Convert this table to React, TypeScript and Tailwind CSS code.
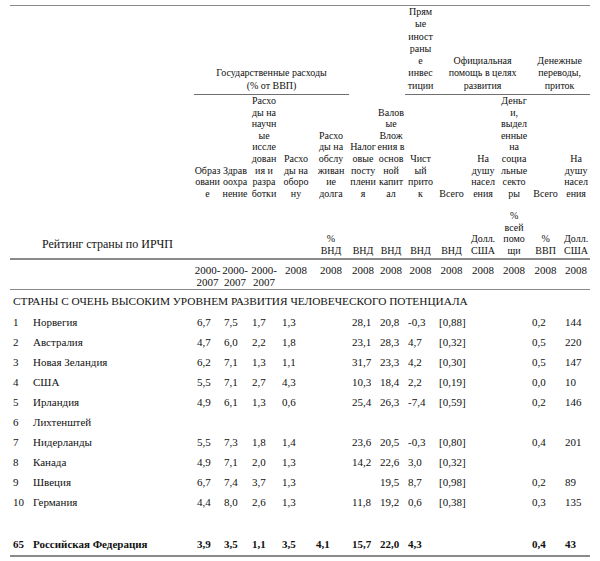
import React from 'react';

type Row = [string, string, string[]];

// 13 числовых столбцов, слева направо
const SUB_HEADERS: string[][] = [
  ['Образ', 'овани', 'е'],
  ['Здрав', 'оохра', 'нение'],
  ['Расхо', 'ды на', 'научн', 'ые', 'иссле', 'дован', 'ия и', 'разра', 'ботки'],
  ['Расхо', 'ды на', 'оборо', 'ну'],
  ['Расхо', 'ды на', 'обслу', 'живан', 'ие', 'долга'],
];

const UNITS: string[][] = [
  [],
  [],
  [],
  [],
  ['%', 'ВНД'],
  ['ВНД'],
  ['ВНД'],
  ['ВНД'],
  ['ВНД'],
  ['Долл.', 'США'],
  ['%', 'всей', 'помо', 'щи'],
  ['%', 'ВВП'],
  ['Долл.', 'США'],
];

const YEARS: string[][] = [
  ['2000-', '2007'],
  ['2000-', '2007'],
  ['2000-', '2007'],
  ['2008'],
  ['2008'],
  ['2008'],
  ['2008'],
  ['2008'],
  ['2008'],
  ['2008'],
  ['2008'],
  ['2008'],
  ['2008'],
];

const ROWS: Row[] = [
  ['1', 'Норвегия', ['6,7', '7,5', '1,7', '1,3', '', '28,1', '20,8', '-0,3', '[0,88]', '', '', '0,2', '144']],
  ['2', 'Австралия', ['4,7', '6,0', '2,2', '1,8', '', '23,1', '28,3', '4,7', '[0,32]', '', '', '0,5', '220']],
  ['3', 'Новая Зеландия', ['6,2', '7,1', '1,3', '1,1', '', '31,7', '23,3', '4,2', '[0,30]', '', '', '0,5', '147']],
  ['4', 'США', ['5,5', '7,1', '2,7', '4,3', '', '10,3', '18,4', '2,2', '[0,19]', '', '', '0,0', '10']],
  ['5', 'Ирландия', ['4,9', '6,1', '1,3', '0,6', '', '25,4', '26,3', '-7,4', '[0,59]', '', '', '0,2', '146']],
  ['6', 'Лихтенштей', ['', '', '', '', '', '', '', '', '', '', '', '', '']],
  ['7', 'Нидерланды', ['5,5', '7,3', '1,8', '1,4', '', '23,6', '20,5', '-0,3', '[0,80]', '', '', '0,4', '201']],
  ['8', 'Канада', ['4,9', '7,1', '2,0', '1,3', '', '14,2', '22,6', '3,0', '[0,32]', '', '', '', '']],
  ['9', 'Швеция', ['6,7', '7,4', '3,7', '1,3', '', '', '19,5', '8,7', '[0,98]', '', '', '0,2', '89']],
  ['10', 'Германия', ['4,4', '8,0', '2,6', '1,3', '', '11,8', '19,2', '0,6', '[0,38]', '', '', '0,3', '135']],
];

const RUSSIA: Row = ['65', 'Российская Федерация', ['3,9', '3,5', '1,1', '3,5', '4,1', '15,7', '22,0', '4,3', '', '', '', '0,4', '43']];

const COLS = [20, 164, 27, 28, 30, 34, 36, 28, 28, 31, 31, 32, 30, 33, 28];

function Lines({ lines }: { lines: string[] }) {
  return (
    <>
      {lines.map((l, i) => (
        <div key={i}>{l}</div>
      ))}
    </>
  );
}

function HeadCell({ lines, rowSpan, colSpan, line }: { lines: string[]; rowSpan?: number; colSpan?: number; line?: boolean }) {
  return (
    <td
      rowSpan={rowSpan}
      colSpan={colSpan}
      className={
        line
          ? 'align-bottom text-center whitespace-nowrap p-0 pb-[2px] leading-[12.3px] border-b border-[#6f6f6f]'
          : 'align-bottom text-center whitespace-nowrap p-0 pb-[2px]'
      }
    >
      <Lines lines={lines} />
    </td>
  );
}

function DataRow({ row, bold }: { row: Row; bold?: boolean }) {
  const [rank, name, values] = row;
  return (
    <tr className={bold ? 'h-[22px] font-bold' : 'h-[20px]'}>
      <td className="p-0 pl-[3px] align-middle whitespace-nowrap">{rank}</td>
      <td className="p-0 pl-[3px] align-middle whitespace-nowrap">{name}</td>
      {values.map((v, i) => (
        <td key={i} className="p-0 pl-[3px] align-middle whitespace-nowrap">
          {v}
        </td>
      ))}
    </tr>
  );
}

export default function App() {
  return (
    <div className="w-[600px] h-[561px] bg-white pt-[5px] pl-[10px] text-[#111] [font-family:Liberation_Serif,Times_New_Roman,serif]">
      <table className="table-fixed border-collapse w-[580px] border-t border-b-2 border-[#8a8a8a] [font-family:Liberation_Serif,Times_New_Roman,serif]">
        <colgroup>
          {COLS.map((w, i) => (
            <col key={i} style={{ width: w }} />
          ))}
        </colgroup>
        <tbody className="text-[10px] leading-[11.6px]">
          <tr className="h-[89px]">
            <td rowSpan={3} colSpan={2} className="align-bottom p-0 pl-[32px] pb-[7px] text-[12px] leading-[14px] border-b-2 border-[#8a8a8a]">
              Рейтинг страны по ИРЧП
            </td>
            <HeadCell colSpan={5} line lines={['Государственные расходы', '(% от ВВП)']} />
            <HeadCell rowSpan={2} lines={['Налог', 'овые', 'посту', 'плени', 'я']} />
            <HeadCell rowSpan={2} lines={['Валов', 'ые', 'Влож', 'ения в', 'основ', 'ной', 'капит', 'ал']} />
            <HeadCell line lines={['Прям', 'ые', 'иност', 'раны', 'е', 'инвес', 'тиции']} />
            <HeadCell colSpan={3} line lines={['Официальная', 'помощь в целях', 'развития']} />
            <HeadCell colSpan={2} line lines={['Денежные', 'переводы,', 'приток']} />
          </tr>
          <tr className="h-[102px]">
            {SUB_HEADERS.map((l, i) => (
              <HeadCell key={i} lines={l} />
            ))}
            <HeadCell lines={['Чист', 'ый', 'прито', 'к']} />
            <HeadCell lines={['Всего']} />
            <HeadCell lines={['На', 'душу', 'насел', 'ения']} />
            <HeadCell lines={['Деньг', 'и,', 'выдел', 'енные', 'на', 'социа', 'льные', 'секто', 'ры']} />
            <HeadCell lines={['Всего']} />
            <HeadCell lines={['На', 'душу', 'насел', 'ения']} />
          </tr>
          <tr className="h-[58px]">
            {UNITS.map((l, i) => (
              <td key={i} className="align-bottom text-center whitespace-nowrap p-0 pb-[2px] border-b-2 border-[#8a8a8a]">
                <Lines lines={l} />
              </td>
            ))}
          </tr>
          <tr className="h-[30px] text-[11px] leading-[12px]">
            <td colSpan={2} className="p-0 border-b border-[#8a8a8a]" />
            {YEARS.map((l, i) => (
              <td key={i} className="align-top text-center whitespace-nowrap p-0 pt-[4px] border-b border-[#8a8a8a]">
                <Lines lines={l} />
              </td>
            ))}
          </tr>
        </tbody>
        <tbody className="text-[11px] leading-[13px]">
          <tr className="h-[23px]">
            <td colSpan={15} className="p-0 pl-[3px] align-middle whitespace-nowrap text-[11.3px]">
              СТРАНЫ С ОЧЕНЬ ВЫСОКИМ УРОВНЕМ РАЗВИТИЯ ЧЕЛОВЕЧЕСКОГО ПОТЕНЦИАЛА
            </td>
          </tr>
          {ROWS.map((r) => (
            <DataRow key={r[0]} row={r} />
          ))}
          <tr className="h-[22px]">
            <td colSpan={15} className="p-0" />
          </tr>
          <DataRow row={RUSSIA} bold />
        </tbody>
      </table>
    </div>
  );
}
